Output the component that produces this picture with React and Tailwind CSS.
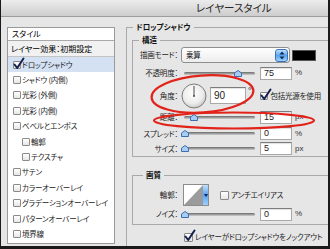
import React from "react";

const jp = "font-['Noto_Sans_CJK_JP',sans-serif] [font-feature-settings:'palt']";
const txt = `text-[7.5px] leading-[10px] tracking-[-0.2px] text-[#1b1b1b] whitespace-nowrap ${jp}`;

function Check({ checked = false, className = "" }) {
  return (
    <span
      className={`relative block w-[8px] h-[8px] shrink-0 rounded-[1px] border border-[#8a8a8a] bg-gradient-to-b from-white to-[#e6e6e6] ${className}`}
    >
      {checked && (
        <svg
          className="absolute left-[-1px] top-[-4px] w-[12px] h-[12px] overflow-visible"
          viewBox="0 0 12 12"
        >
          <path
            d="M1.5 6.5 L4.2 10 L10.5 0.5"
            fill="none"
            stroke="#13204d"
            strokeWidth="2"
            strokeLinecap="round"
            strokeLinejoin="round"
          />
        </svg>
      )}
    </span>
  );
}

function Slider({ thumb }) {
  return (
    <div className="relative w-[71px] h-[9px] flex items-center">
      <div className="w-full h-[3px] rounded-full bg-gradient-to-b from-[#6a6a6a] to-[#cfcfcf]" />
      <svg className={`absolute top-[1px] w-[8px] h-[7px] ${thumb}`} viewBox="0 0 8 7">
        <path
          d="M4 0.5 L7.5 3 L7.5 6.5 L0.5 6.5 L0.5 3 Z"
          fill="#a6cdf3"
          stroke="#3d6eae"
          strokeWidth="1"
        />
      </svg>
    </div>
  );
}

function Field({ children, className = "" }) {
  return (
    <div
      className={`bg-white border border-[#a8a8a8] border-t-[#7c7c7c] shadow-[inset_0_1px_1px_rgba(0,0,0,0.12)] pl-[3px] font-['Liberation_Sans',sans-serif] text-[#222] ${className}`}
    >
      {children}
    </div>
  );
}

function Label({ children }) {
  return <div className={`w-[45px] shrink-0 text-right ${txt}`}>{children}</div>;
}

function SliderRow({ label, thumb, value, unit, h }) {
  return (
    <div className={`flex items-center ${h}`}>
      <Label>{label}</Label>
      <div className="ml-[6px]">
        <Slider thumb={thumb} />
      </div>
      <Field className="ml-[5px] w-[32px] h-[13px] text-[9px] leading-[11px]">{value}</Field>
      <span className="ml-[3px] text-[8px] leading-[10px] text-[#333] font-['Liberation_Sans',sans-serif]">
        {unit}
      </span>
    </div>
  );
}

const items = [
  { t: "ドロップシャドウ", c: true, sel: true },
  { t: "シャドウ (内側)" },
  { t: "光彩 (外側)" },
  { t: "光彩 (内側)" },
  { t: "ベベルとエンボス" },
  { t: "輪郭", indent: true },
  { t: "テクスチャ", indent: true },
  { t: "サテン" },
  { t: "カラーオーバーレイ" },
  { t: "グラデーションオーバーレイ" },
  { t: "パターンオーバーレイ" },
  { t: "境界線" },
];

export default function App() {
  return (
    <div className="relative w-[330px] h-[249px] overflow-hidden bg-[#e6e6e6] border-l border-r-2 border-b-[3px] border-[#1a1a1a]">
      {/* title bar */}
      <div className="h-[17px] border-b border-[#9c9c9c] bg-gradient-to-b from-[#ececec] to-[#cdcdcd] flex items-center pl-[195px]">
        <span className={`text-[10.5px] leading-[12px] text-[#262626] ${jp}`}>レイヤースタイル</span>
      </div>

      {/* body */}
      <div className="flex items-start pt-[5px] pl-[6px]">
        {/* left list */}
        <div className="mt-[5px] w-[108px] h-[217px] shrink-0 bg-white border border-[#9a9a9a]">
          <div className={`h-[13px] flex items-center pl-[4px] text-[8px] text-black border-b border-[#a9a9a9] ${jp}`}>
            スタイル
          </div>
          <div className={`h-[16px] flex items-center pl-[3px] text-[8px] text-black bg-[#f1f1f1] border-b border-[#c4c4c4] ${jp}`}>
            レイヤー効果：初期設定
          </div>
          {items.map((it) => (
            <div
              key={it.t}
              className={`h-[15.4px] flex items-center ${it.sel ? "bg-[#d3e1f3]" : ""} ${
                it.indent ? "pl-[14px]" : "pl-[5px]"
              }`}
            >
              <Check checked={!!it.c} />
              <span className={`ml-[1px] ${txt}`}>{it.t}</span>
            </div>
          ))}
        </div>

        {/* right: drop shadow group */}
        <fieldset className="ml-[11px] w-[230px] shrink-0 border border-[#a9a9a9] pb-[20px]">
          <legend className={`ml-[6px] px-[3px] text-[7.5px] leading-[10px] text-[#111] font-bold ${jp}`}>
            ドロップシャドウ
          </legend>

          {/* 構造 */}
          <fieldset className="mt-[3px] ml-[5px] border border-[#a9a9a9] pt-[2px]">
            <legend className={`ml-[6px] px-[3px] text-[7.5px] leading-[10px] text-[#111] font-bold ${jp}`}>
              構造
            </legend>

            <div className="flex items-center h-[16px]">
              <Label>描画モード：</Label>
              <div className="ml-[3px] w-[109px] h-[16px] flex items-center rounded-[3px] border border-[#8e8e8e] bg-gradient-to-b from-white to-[#ededed]">
                <span className={`pl-[4px] flex-1 ${txt}`}>乗算</span>
                <span className="w-[13px] h-[13px] mr-[1px] rounded-[3px] border border-[#3b73b8] bg-gradient-to-b from-[#bfe0ff] via-[#5aa4ee] to-[#9cd0ff] flex items-center justify-center">
                  <svg className="w-[6px] h-[9px]" viewBox="0 0 6 9">
                    <path d="M0.5 3.5 L3 0.5 L5.5 3.5 Z M0.5 5.5 L3 8.5 L5.5 5.5 Z" fill="#0f2a55" />
                  </svg>
                </span>
              </div>
              <div className="ml-[2px] w-[24px] h-[11px] bg-black border border-[#555]" />
            </div>

            <SliderRow label="不透明度：" thumb="left-[50px]" value="75" unit="%" h="h-[20px]" />

            <div className="flex items-center h-[25px]">
              <Label>角度：</Label>
              <svg className="ml-[3px] w-[26px] h-[26px] shrink-0" viewBox="0 0 26 26">
                <defs>
                  <radialGradient id="dialg" cx="45%" cy="40%" r="60%">
                    <stop offset="0%" stopColor="#ffffff" />
                    <stop offset="70%" stopColor="#ececec" />
                    <stop offset="100%" stopColor="#c8c8c8" />
                  </radialGradient>
                </defs>
                <circle cx="13" cy="13" r="12" fill="url(#dialg)" stroke="#7d7d7d" strokeWidth="1" />
                <line x1="13" y1="13" x2="13" y2="3" stroke="#4a4a4a" strokeWidth="1" />
                <circle cx="13" cy="13" r="1" fill="#4a4a4a" />
              </svg>
              <Field className="ml-[3px] w-[36px] h-[17px] text-[10px] leading-[15px]">90</Field>
              <span className="self-start mt-[4px] ml-[2px] text-[8px] leading-[8px] text-[#333]">°</span>
              <Check checked className="ml-[9px]" />
              <span className={`ml-[2px] ${txt}`}>包括光源を使用</span>
            </div>

            <SliderRow label="距離：" thumb="left-[6px]" value="15" unit="px" h="h-[18px]" />
            <SliderRow label="スプレッド：" thumb="left-[-3px]" value="0" unit="%" h="h-[15px]" />
            <SliderRow label="サイズ：" thumb="left-[-3px]" value="5" unit="px" h="h-[15px]" />
          </fieldset>

          {/* 画質 */}
          <fieldset className="mt-[13px] ml-[5px] border border-[#a9a9a9] pt-[4px] pb-[2px]">
            <legend className={`ml-[10px] px-[3px] text-[7.5px] leading-[10px] text-[#111] font-bold ${jp}`}>
              画質
            </legend>
            <div className="flex items-center h-[22px]">
              <Label>輪郭：</Label>
              <div className="ml-[5px] w-[26px] h-[22px] flex border border-[#8c8c8c] bg-white">
                <svg className="w-[19px] h-[20px]" viewBox="0 0 19 20" preserveAspectRatio="none">
                  <polygon points="0,20 19,0 19,20" fill="#9b9b9b" />
                </svg>
                <span className="w-[5px] h-[20px] bg-gradient-to-b from-[#bfe0ff] via-[#5aa4ee] to-[#9cd0ff] flex items-center justify-center">
                  <svg className="w-[4px] h-[3px]" viewBox="0 0 4 3">
                    <path d="M0 0 L4 0 L2 3 Z" fill="#0f2a55" />
                  </svg>
                </span>
              </div>
              <Check className="ml-[11px] w-[9px] h-[9px]" />
              <span className={`ml-[2px] ${txt}`}>アンチエイリアス</span>
            </div>
            <SliderRow label="ノイズ：" thumb="left-[-3px]" value="0" unit="%" h="h-[16px]" />
          </fieldset>

          <div className="mt-[5px] h-[14px] flex items-center pl-[57px]">
            <Check checked className="w-[9px] h-[9px]" />
            <span className={`ml-[2px] ${txt}`}>レイヤーがドロップシャドウをノックアウト</span>
          </div>
        </fieldset>
      </div>

      {/* red annotation ellipses */}
      <svg className="absolute left-0 top-0 w-[330px] h-[249px] pointer-events-none" viewBox="0 0 330 249">
        <ellipse
          cx="201.5"
          cy="94"
          rx="51"
          ry="18.5"
          transform="rotate(-4 201.5 94)"
          fill="none"
          stroke="#e2231a"
          strokeWidth="2.2"
        />
        <ellipse cx="233" cy="120.5" rx="80" ry="8" fill="none" stroke="#e2231a" strokeWidth="2.2" />
      </svg>
    </div>
  );
}
